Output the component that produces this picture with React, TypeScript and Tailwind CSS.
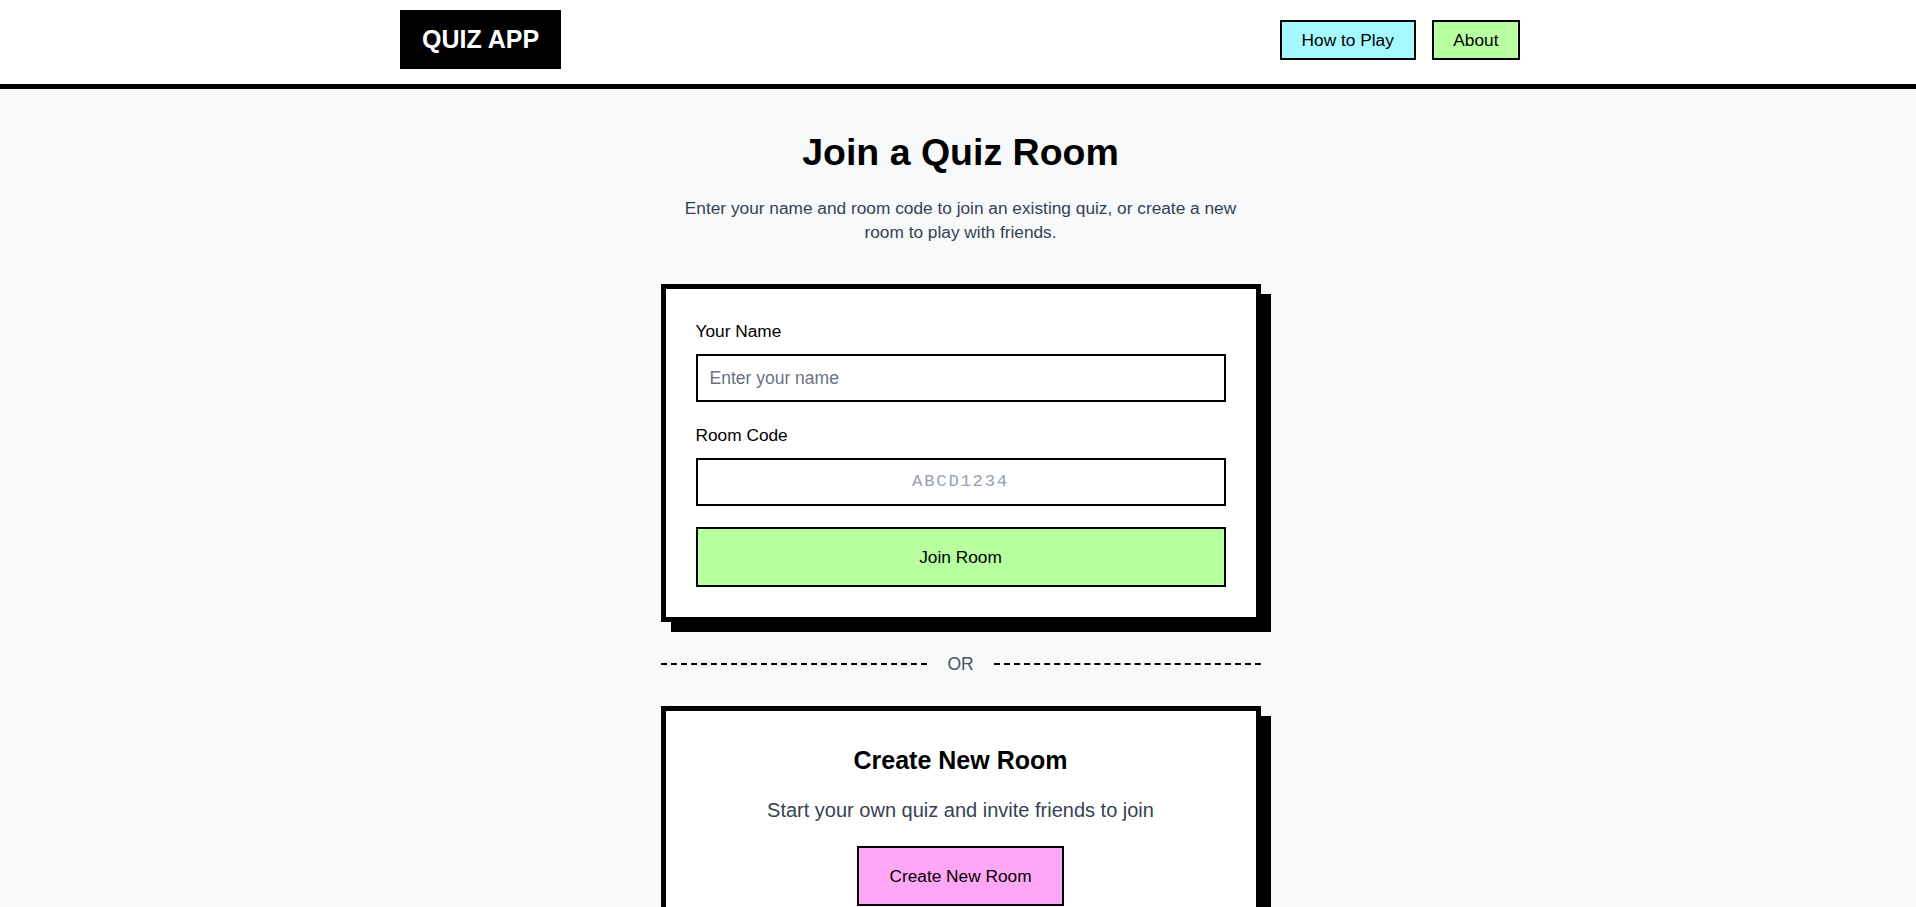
import { useState } from "react";

export default function App() {
  const [name, setName] = useState("");
  const [code, setCode] = useState("");

  return (
    <div className="min-h-screen bg-[#f8f9fa] pl-[5px] font-['Liberation_Sans',Arial,sans-serif] text-black">
      <header className="bg-white border-b-[5px] border-black -ml-[5px] pl-[4px]">
        <div className="max-w-6xl mx-auto px-4 pt-2.5 pb-[15px] flex items-center justify-between">
          <div className="h-[59px] px-[22px] flex items-center bg-black text-white text-[25px] font-bold">
            QUIZ APP
          </div>
          <nav className="flex items-center gap-4">
            <button className="px-5 py-1.5 border-2 border-black bg-[#a6faff] text-[17.3px] leading-6">
              How to Play
            </button>
            <button className="px-[19.5px] py-1.5 border-2 border-black bg-[#b8ff9f] text-[17.3px] leading-6">
              About
            </button>
          </nav>
        </div>
      </header>

      <main className="pt-[43px] pb-16 px-4">
        <div className="max-w-[600px] mx-auto">
          <h1 className="text-[37.5px] leading-10 font-bold text-center mb-6">Join a Quiz Room</h1>
          <p className="max-w-xl mx-auto text-center text-[17.3px] leading-6 text-gray-700 mb-10">
            Enter your name and room code to join an existing quiz, or create a new
            room to play with friends.
          </p>

          {/* join card */}
          <div className="bg-white border-[5px] border-black p-[30px] shadow-[10px_10px_0_0_#000] text-[17.3px] leading-6">
            <label className="block mb-[11px]">Your Name</label>
            <input
              value={name}
              onChange={(e) => setName(e.target.value)}
              placeholder="Enter your name"
              className="w-full px-3 py-2.5 border-2 border-black bg-white outline-none text-[17.5px] leading-6 placeholder:text-gray-500"
            />
            <label className="block mt-[21px] mb-[11px]">Room Code</label>
            <input
              value={code}
              onChange={(e) => setCode(e.target.value.toUpperCase())}
              placeholder="ABCD1234"
              className="w-full px-3 py-2.5 border-2 border-black bg-white outline-none text-center text-[17.3px] leading-6 font-['Liberation_Mono',monospace] tracking-widest placeholder:text-gray-400"
            />
            <button className="w-full mt-[21px] py-4 border-2 border-black bg-[#b8ff9f] leading-6">
              Join Room
            </button>
          </div>

          {/* divider */}
          <div className="flex items-center my-[30px]">
            <div className="flex-1 border-t-2 border-dashed border-black" />
            <span className="px-[20px] text-[17.5px] leading-6 text-gray-600">OR</span>
            <div className="flex-1 border-t-2 border-dashed border-black" />
          </div>

          {/* create card */}
          <div className="bg-white border-[5px] border-black px-[30px] pt-[33px] pb-[30px] shadow-[10px_10px_0_0_#000] text-center">
            <h2 className="text-[25px] leading-8 font-bold mb-5">Create New Room</h2>
            <p className="text-xl leading-7 text-gray-700 mb-[22px]">
              Start your own quiz and invite friends to join
            </p>
            <button className="px-[30px] py-4 border-2 border-black bg-[#ffa6f6] text-[17.3px] leading-6">
              Create New Room
            </button>
          </div>
        </div>
      </main>
    </div>
  );
}
